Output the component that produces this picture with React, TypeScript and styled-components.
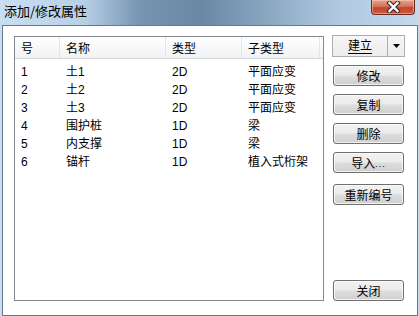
import styled, { createGlobalStyle } from 'styled-components'

const GlobalStyle = createGlobalStyle`
  html, body {
    margin: 0;
    padding: 0;
    background: #ffffff;
  }
  body {
    font-family: 'Liberation Sans', 'Noto Sans CJK SC', sans-serif;
    font-size: 12px;
  }
`

const DialogFrame = styled.div`
  width: 419px;
  height: 316px;
  box-sizing: border-box;
  display: flex;
  flex-direction: column;
  padding: 0 1px 2px 2px;
  background: linear-gradient(90deg, #c8def2 0%, #b8d0e6 20%, #7896b3 33%, #6a88a6 48%, #86a3be 62%, #afc8df 80%, #c4d9ee 100%);
`

const TitleBar = styled.div`
  height: 25px;
  flex: none;
  display: flex;
  align-items: flex-start;
  justify-content: space-between;
  margin-left: -2px;
`

const TitleText = styled.div`
  padding: 3px 0 0 4px;
  font-family: 'Noto Sans CJK SC', sans-serif;
  font-size: 13px;
  line-height: 16px;
  color: #000;
`

const CloseButton = styled.div`
  width: 44px;
  height: 15px;
  margin-right: 3px;
  box-sizing: border-box;
  border: 1px solid #6e2a20;
  border-top: none;
  border-radius: 0 0 4px 4px;
  background: linear-gradient(180deg, #e7a390 0%, #d5735c 45%, #c4452d 55%, #cf5a3e 100%);
  box-shadow: inset 0 0 0 1px rgba(255, 220, 200, 0.45);
  display: flex;
  align-items: center;
  justify-content: center;
`

const Client = styled.div`
  flex: 1;
  box-sizing: border-box;
  border: 1px solid #6b7889;
  background: #ffffff;
  display: flex;
  padding: 10px 11px 14px 11px;
  gap: 8px;
`

const ListBox = styled.div`
  width: 310px;
  height: 265px;
  box-sizing: border-box;
  border: 1px solid #828790;
  display: flex;
  flex-direction: column;
`

const HeaderRow = styled.div`
  display: flex;
  height: 21px;
  background: linear-gradient(180deg, #ffffff 0%, #f7f8f9 50%, #f1f2f4 100%);
  border-bottom: 1px solid #d5d5d5;
  margin-bottom: 4px;
`

const HeaderCell = styled.div<{ $w: number }>`
  width: ${p => p.$w}px;
  flex: none;
  box-sizing: border-box;
  padding-left: 6px;
  border-right: 1px solid #e3e5e7;
  font-family: 'Noto Sans CJK SC', sans-serif;
  line-height: 21px;
  color: #000;
`

const Row = styled.div`
  display: flex;
  height: 18px;
`

const Cell = styled.div<{ $w: number }>`
  width: ${p => p.$w}px;
  flex: none;
  box-sizing: border-box;
  padding-left: 6px;
  line-height: 18px;
  color: #000;
  white-space: nowrap;
`

const ButtonColumn = styled.div`
  width: 73px;
  display: flex;
  flex-direction: column;
  align-items: flex-end;
  margin-top: -1px;
`

const SplitButton = styled.div`
  width: 73px;
  height: 22px;
  box-sizing: border-box;
  border: 1px solid #adadad;
  background: linear-gradient(180deg, #f6f6f6 0%, #ededed 100%);
  display: flex;
  margin-bottom: 8px;
`

const SplitMain = styled.div`
  flex: 1;
  display: flex;
  align-items: center;
  justify-content: center;
  border-right: 1px solid #adadad;
`

const Underlined = styled.span`
  border-bottom: 1px solid #000;
  line-height: 14px;
`

const SplitArrow = styled.div`
  width: 16px;
  display: flex;
  align-items: center;
  justify-content: center;
`

const Button = styled.div<{ $gap?: number }>`
  width: 71px;
  height: 21px;
  box-sizing: border-box;
  margin-right: 1px;
  margin-bottom: ${p => p.$gap ?? 8}px;
  border: 1px solid #707070;
  border-radius: 3px;
  background: linear-gradient(180deg, #f2f2f2 0%, #ebebeb 48%, #dddddd 52%, #cfcfcf 100%);
  box-shadow: inset 0 0 0 1px rgba(255, 255, 255, 0.7);
  display: flex;
  align-items: center;
  justify-content: center;
  color: #000;
`

const Dots = styled.span`
  font-size: 9px;
  letter-spacing: 1px;
  align-self: flex-end;
  margin-bottom: 3px;
`

const Spacer = styled.div`
  flex: 1;
`

const cols = [45, 106, 76, 78]

const rows = [
  ['1', '土1', '2D', '平面应变'],
  ['2', '土2', '2D', '平面应变'],
  ['3', '土3', '2D', '平面应变'],
  ['4', '围护桩', '1D', '梁'],
  ['5', '内支撑', '1D', '梁'],
  ['6', '锚杆', '1D', '植入式桁架'],
]

export default function App() {
  return (
    <>
      <GlobalStyle />
      <DialogFrame>
        <TitleBar>
          <TitleText>添加/修改属性</TitleText>
          <CloseButton>
            <svg width="15" height="12" viewBox="0 0 15 12">
              <path d="M3.5 2 L11.5 10 M11.5 2 L3.5 10" stroke="#3a2a28" strokeWidth="4.5" strokeLinecap="square" />
              <path d="M3.5 2 L11.5 10 M11.5 2 L3.5 10" stroke="#ffffff" strokeWidth="2.3" strokeLinecap="square" />
            </svg>
          </CloseButton>
        </TitleBar>
        <Client>
          <ListBox>
            <HeaderRow>
              <HeaderCell $w={cols[0]}>号</HeaderCell>
              <HeaderCell $w={cols[1]}>名称</HeaderCell>
              <HeaderCell $w={cols[2]}>类型</HeaderCell>
              <HeaderCell $w={cols[3]}>子类型</HeaderCell>
            </HeaderRow>
            {rows.map(r => (
              <Row key={r[0]}>
                {r.map((v, i) => (
                  <Cell key={i} $w={cols[i]}>{v}</Cell>
                ))}
              </Row>
            ))}
          </ListBox>
          <ButtonColumn>
            <SplitButton>
              <SplitMain>
                <Underlined>建立</Underlined>
              </SplitMain>
              <SplitArrow>
                <svg width="7" height="4" viewBox="0 0 7 4">
                  <path d="M0 0 H7 L3.5 4 Z" fill="#000" />
                </svg>
              </SplitArrow>
            </SplitButton>
            <Button>修改</Button>
            <Button>复制</Button>
            <Button>删除</Button>
            <Button $gap={11}>导入<Dots>...</Dots></Button>
            <Button>重新编号</Button>
            <Spacer />
            <Button $gap={0}>关闭</Button>
          </ButtonColumn>
        </Client>
      </DialogFrame>
    </>
  )
}
